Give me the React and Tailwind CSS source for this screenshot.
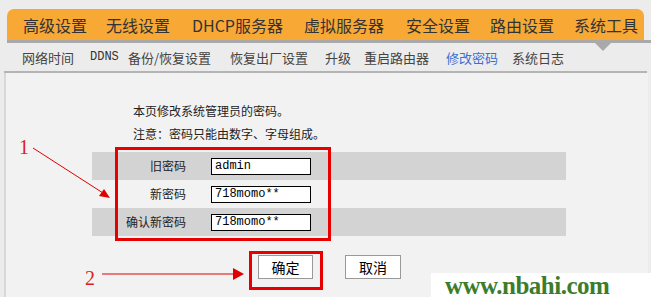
import React from "react";

const mainNav = [
  { label: "高级设置", w: "w-[83px]" },
  { label: "无线设置", w: "w-[86px]" },
  { label: "DHCP服务器", w: "w-[112px]" },
  { label: "虚拟服务器", w: "w-[102px]" },
  { label: "安全设置", w: "w-[84px]" },
  { label: "路由设置", w: "w-[84px]" },
  { label: "系统工具", w: "w-[70px]" },
];

const subNav = [
  { label: "网络时间", w: "w-[68px]" },
  { label: "DDNS", w: "w-[38px]", mono: true },
  { label: "备份/恢复设置", w: "w-[102px]" },
  { label: "恢复出厂设置", w: "w-[95px]" },
  { label: "升级", w: "w-[39px]" },
  { label: "重启路由器", w: "w-[82px]" },
  { label: "修改密码", w: "w-[66px]", active: true },
  { label: "系统日志", w: "w-[60px]" },
];

const rows = [
  { label: "旧密码", value: "admin", shade: true },
  { label: "新密码", value: "718momo**", shade: false },
  { label: "确认新密码", value: "718momo**", shade: true },
];

const cjk = { fontFamily: '"Noto Sans CJK SC", "Noto Sans", sans-serif' };
const serif = { fontFamily: '"Liberation Serif", serif' };
const mono = { fontFamily: '"Liberation Mono", monospace' };

const App = () => {
  return (
    <div className="relative w-[651px] h-[297px] overflow-hidden bg-[#ececec] pt-[9px]" style={cjk}>
      {/* top menu */}
      <div className="mx-[7px] h-[31px] bg-[#f8a835] rounded-t-[7px] flex items-center pl-[16px] text-[16px] text-[#333] leading-none whitespace-nowrap">
        {mainNav.map((item) => (
          <span key={item.label} className={`${item.w} shrink-0`}>
            {item.label}
          </span>
        ))}
      </div>
      <div className="relative ml-[7px] h-[3px] bg-[#a9a9a9]">
        <div className="absolute left-[588px] top-[3px] w-0 h-0 border-l-[8px] border-r-[8px] border-t-[8px] border-l-transparent border-r-transparent border-t-[#a9a9a9]" />
      </div>

      {/* sub menu */}
      <div className="h-[28px] flex items-center pl-[22px] text-[13px] text-[#444] leading-none whitespace-nowrap">
        {subNav.map((item) =>
          item.mono ? (
            <span key={item.label} className={`${item.w} shrink-0 text-[12px] text-[#333]`} style={mono}>
              {item.label}
            </span>
          ) : (
            <span key={item.label} className={`${item.w} shrink-0 ${item.active ? "text-[#3b6fd4]" : ""}`}>
              {item.label}
            </span>
          )
        )}
      </div>
      <div className="mx-[4px] h-[2px] bg-[#b4b4b4]" />

      {/* content */}
      <div className="ml-[4px] mr-[3px] h-[230px] border-l-[2px] border-[#d8d8d8] bg-[#f2f2f2] pt-[26px] text-[12px] text-[#222]">
        <p className="pl-[127px] leading-[23px]">本页修改系统管理员的密码。</p>
        <p className="pl-[127px] leading-[23px]">注意：密码只能由数字、字母组成。</p>

        <div className="ml-[86px] mt-[7px] w-[474px]">
          {rows.map((r) => (
            <div
              key={r.label}
              className={`flex items-center h-[28px] ${r.shade ? "bg-[#d3d3d3]" : ""}`}
            >
              <span className="w-[94px] text-right">{r.label}</span>
              <div
                className="ml-[25px] w-[100px] h-[17px] bg-white border border-black flex items-center pl-[3px] text-[12px] text-black"
                style={mono}
              >
                {r.value}
              </div>
            </div>
          ))}
        </div>

        <div className="flex pl-[252px] mt-[19px] gap-[32px]">
          <button className="w-[55px] h-[24px] bg-white border border-[#999] text-[14px] text-black">确定</button>
          <button className="w-[56px] h-[24px] bg-white border border-[#999] text-[14px] text-black">取消</button>
        </div>
      </div>

      {/* annotations */}
      <div className="absolute left-[115px] top-[147px] w-[216px] h-[94px] border-[3px] border-[#e60000]" />
      <div className="absolute left-[249px] top-[251px] w-[74px] h-[39px] border-[3px] border-[#e60000]" />
      <span className="absolute left-[19px] top-[132px] text-[20px] text-[#e02020]" style={serif}>1</span>
      <span className="absolute left-[85px] top-[263px] text-[20px] text-[#e02020]" style={serif}>2</span>
      <svg className="absolute left-0 top-0" width="651" height="297">
        <line x1="33" y1="148" x2="103" y2="193" stroke="#e00000" strokeWidth="1" />
        <polygon points="110,198 99,196 104,189" fill="#e00000" />
        <line x1="102" y1="274" x2="236" y2="274" stroke="#e00000" strokeWidth="1" />
        <polygon points="244,274 233,268 233,280" fill="#e00000" />
      </svg>

      {/* watermark */}
      <div className="absolute left-[431px] top-[273px] w-[220px] h-[24px] bg-white flex items-center pl-[14px] overflow-hidden">
        <span className="text-[25px] font-bold text-[#3b7d2c] leading-none tracking-[-0.5px] whitespace-nowrap" style={serif}>
          www.nbahi.com
        </span>
      </div>
    </div>
  );
};

export default App;
